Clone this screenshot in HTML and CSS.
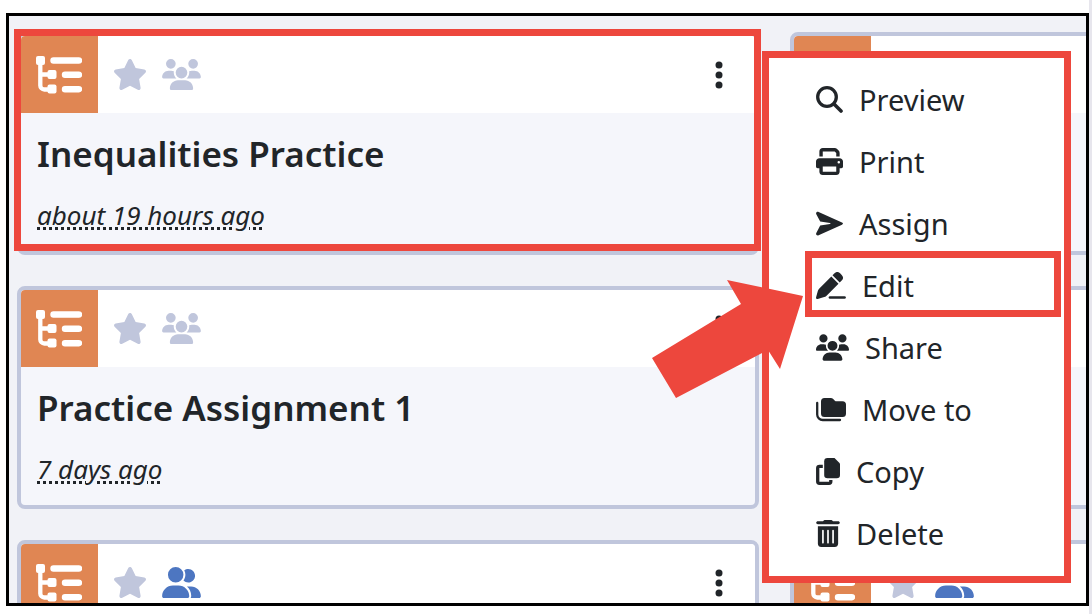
FILE: index.html
```html
<!DOCTYPE html>
<html lang="en">
<head>
    <meta charset="UTF-8">
    <meta name="viewport" content="width=device-width, initial-scale=1.0">
    <title>Assignments</title>
    <link rel="stylesheet" href="styles.css">
</head>
<body>

    <!-- shared icons -->
    <svg class="sprite" aria-hidden="true">
        <symbol id="tree" viewBox="0 0 46 38">
            <rect x="0" y="0" width="9" height="9" rx="2"/>
            <rect x="11.500" y="14" width="9" height="9" rx="2"/>
            <rect x="11.500" y="28.500" width="9" height="9" rx="2"/>
            <path d="M4.300 7v22.500a4 4 0 0 0 4 4H14M4.300 18.500H14" fill="none" stroke="currentColor" stroke-width="4.300"/>
            <path d="M17.500 4.500H43M29 18.800H43M29 33.200H43" fill="none" stroke="currentColor" stroke-width="6.400" stroke-linecap="round"/>
        </symbol>
        <symbol id="star" viewBox="24 0 528 512">
            <path d="M316.900 18C311.600 7 300.400 0 288.100 0s-23.400 7-28.800 18L195 150.300 51.400 171.500c-12 1.800-22 10.200-25.700 21.700s-.7 24.200 7.900 32.700L137.800 329 113.200 474.700c-2 12 3 24.200 12.900 31.300s23 8 33.800 2.300l128.300-68.500 128.300 68.500c10.800 5.700 23.900 4.900 33.800-2.300s14.900-19.300 12.900-31.300L438.500 329 542.700 225.900c8.600-8.500 11.700-21.200 7.900-32.700s-13.700-19.900-25.700-21.700L381.200 150.300 316.900 18z"/>
        </symbol>
        <symbol id="group" viewBox="0 0 640 512">
            <path d="M144 0a80 80 0 1 1 0 160A80 80 0 1 1 144 0zM512 0a80 80 0 1 1 0 160A80 80 0 1 1 512 0zM0 298.700C0 239.800 47.800 192 106.700 192h42.700c15.900 0 31 3.500 44.600 9.700c-1.300 7.200-1.900 14.700-1.900 22.300c0 38.200 16.800 72.500 43.300 96c-.2 0-.4 0-.7 0H21.300C9.600 320 0 310.400 0 298.700zM405.300 320c-.2 0-.4 0-.7 0c26.600-23.500 43.300-57.800 43.300-96c0-7.600-.7-15-1.900-22.300c13.600-6.300 28.700-9.700 44.600-9.700h42.700C592.200 192 640 239.800 640 298.700c0 11.800-9.600 21.300-21.300 21.300H405.300zM224 224a96 96 0 1 1 192 0 96 96 0 1 1 -192 0zM128 485.300C128 411.700 187.700 352 261.300 352H378.700C452.300 352 512 411.700 512 485.300c0 14.700-11.900 26.700-26.700 26.700H154.700c-14.700 0-26.700-11.900-26.700-26.700z"/>
        </symbol>
        <symbol id="pair" viewBox="0 0 640 512">
            <path d="M96 128a128 128 0 1 1 256 0A128 128 0 1 1 96 128zM0 482.300C0 383.800 79.800 304 178.300 304h91.400C368.200 304 448 383.800 448 482.300c0 16.400-13.300 29.700-29.700 29.700H29.700C13.300 512 0 498.700 0 482.300zM609.300 512H471.400c5.400-9.400 8.600-20.300 8.600-32v-8c0-60.700-27.100-115.200-69.800-151.800c2.400-.1 4.700-.2 7.100-.2h61.400C567.800 320 640 392.200 640 481.300c0 17-13.800 30.700-30.700 30.700zM432 256c-31 0-59-12.600-79.300-32.900C372.400 196.500 384 163.600 384 128c0-26.800-6.600-52.100-18.300-74.300C384.300 40.100 407.200 32 432 32c61.900 0 112 50.100 112 112s-50.100 112-112 112z"/>
        </symbol>
        <symbol id="dots" viewBox="0 0 8 28">
            <circle cx="4" cy="4" r="3.500"/><circle cx="4" cy="14" r="3.500"/><circle cx="4" cy="24" r="3.500"/>
        </symbol>
    </svg>

    <main class="frame">
        <div class="grid">
            <article class="card selected">
                <header class="card-head">
                    <span class="type"><svg class="i-tree"><use href="#tree"/></svg></span>
                    <svg class="i-star"><use href="#star"/></svg>
                    <svg class="i-group"><use href="#group"/></svg>
                    <button class="more" type="button" aria-label="More"><svg class="i-dots"><use href="#dots"/></svg></button>
                </header>
                <div class="card-body">
                    <h2>Inequalities Practice</h2>
                    <p><abbr>about 19 hours ago</abbr></p>
                </div>
            </article>
            <article class="card">
                <header class="card-head">
                    <span class="type"></span>
                </header>
                <div class="card-body"></div>
            </article>

            <article class="card">
                <header class="card-head">
                    <span class="type"><svg class="i-tree"><use href="#tree"/></svg></span>
                    <svg class="i-star"><use href="#star"/></svg>
                    <svg class="i-group"><use href="#group"/></svg>
                    <button class="more" type="button" aria-label="More"><svg class="i-dots"><use href="#dots"/></svg></button>
                </header>
                <div class="card-body">
                    <h2>Practice Assignment 1</h2>
                    <p><abbr>7 days ago</abbr></p>
                </div>
            </article>
            <article class="card">
                <header class="card-head">
                    <span class="type"></span>
                </header>
                <div class="card-body"></div>
            </article>

            <article class="card">
                <header class="card-head">
                    <span class="type"><svg class="i-tree"><use href="#tree"/></svg></span>
                    <svg class="i-star"><use href="#star"/></svg>
                    <svg class="i-group shared"><use href="#pair"/></svg>
                    <button class="more" type="button" aria-label="More"><svg class="i-dots"><use href="#dots"/></svg></button>
                </header>
                <div class="card-body"></div>
            </article>
            <article class="card">
                <header class="card-head">
                    <span class="type"><svg class="i-tree"><use href="#tree"/></svg></span>
                    <svg class="i-star"><use href="#star"/></svg>
                    <svg class="i-group shared"><use href="#pair"/></svg>
                </header>
                <div class="card-body"></div>
            </article>
        </div>

        <!-- dropdown of the first card -->
        <div class="menu">
            <button class="item" type="button">
                <svg width="27" height="27" viewBox="0 0 27 27"><circle cx="11" cy="11" r="9.300" fill="none" stroke="currentColor" stroke-width="3.300"/><path d="M18 18l7 7" stroke="currentColor" stroke-width="3.600" stroke-linecap="round"/></svg>
                Preview
            </button>
            <button class="item" type="button">
                <svg width="27" height="27" viewBox="0 0 512 512"><path d="M128 0C92.700 0 64 28.700 64 64v96h64V64H354.700L384 93.300V160h64V93.300c0-17-6.700-33.300-18.700-45.300L400 18.700C388 6.700 371.700 0 354.700 0H128zM384 352v32 64H128V384 368 352H384zm64 32h32c17.700 0 32-14.300 32-32V256c0-35.300-28.700-64-64-64H64c-35.300 0-64 28.700-64 64v96c0 17.700 14.300 32 32 32H64v64c0 35.300 28.700 64 64 64H384c35.300 0 64-28.700 64-64V384zM432 248a24 24 0 1 1 0 48 24 24 0 1 1 0-48z"/></svg>
                Print
            </button>
            <button class="item" type="button">
                <svg width="27" height="27" viewBox="0 0 27 27"><path d="M.300 4.200C-.5 2.600 1 1.200 2.600 1.900L26 12.400c1.300.6 1.300 1.700 0 2.300L2.600 25.200C1 25.900-.5 24.500.300 22.900L4.200 15.500l9.800-1.400c.7-.1.700-1 0-1.100L4.200 11.600z"/></svg>
                Assign
            </button>
            <button class="item current" type="button">
                <svg width="30" height="27" viewBox="0 0 30 27"><path d="M18.500 1.300a4 4 0 0 1 5.600 0l1.600 1.600a4 4 0 0 1 0 5.600l-2 2-7.200-7.200zM15.300 4.500l7.200 7.200L10.300 23.900a5 5 0 0 1-2.100 1.200L1.700 26.900C.7 27.200-.2 26.300.100 25.300l1.800-6.500c.2-.8.700-1.500 1.200-2.100z"/><path d="M14 25.500H28.500" stroke="currentColor" stroke-width="2.700" stroke-linecap="round"/></svg>
                Edit
            </button>
            <button class="item" type="button">
                <svg width="33" height="27"><use href="#group"/></svg>
                Share
            </button>
            <button class="item" type="button">
                <svg width="30" height="27" viewBox="0 0 30 27"><path d="M5 5.500a3.500 3.500 0 0 1 3.500-3.500h6.200c1 0 1.900.4 2.500 1l1.700 1.700c.4.400.9.600 1.400.6h6.200A3.500 3.500 0 0 1 30 8.800v8.700a3.500 3.500 0 0 1-3.500 3.500h-18A3.500 3.500 0 0 1 5 17.500z"/><path d="M1.200 7v11.500a5.500 5.500 0 0 0 5.500 5.500H24" fill="none" stroke="currentColor" stroke-width="2.300" stroke-linecap="round"/></svg>
                Move to
            </button>
            <button class="item" type="button">
                <svg width="24" height="27" viewBox="0 0 24 27"><path d="M11.500 0H18.500l5.500 5.500V17a3.300 3.300 0 0 1-3.300 3.300H11.500A3.300 3.300 0 0 1 8.200 17V3.300A3.300 3.300 0 0 1 11.500 0z"/><path d="M6.800 8.300H3.500A1.800 1.800 0 0 0 1.700 10v13.500a1.800 1.800 0 0 0 1.800 1.800h9.500a1.800 1.800 0 0 0 1.800-1.800V22" fill="none" stroke="currentColor" stroke-width="3.300"/></svg>
                Copy
            </button>
            <button class="item" type="button">
                <svg width="24" height="27" viewBox="0 0 448 512"><path d="M135.200 17.700C140.600 6.800 151.700 0 163.800 0H284.200c12.100 0 23.200 6.800 28.600 17.700L320 24h96c17.700 0 32 12 32 28s-14.300 28-32 28H32C14.300 80 0 68 0 52S14.300 24 32 24h96l7.200-6.300zM32 120H416V448c0 35.300-28.700 64-64 64H96c-35.300 0-64-28.700-64-64V120zm96 64c-8.800 0-16 7.200-16 16V432c0 8.800 7.200 16 16 16s16-7.200 16-16V200c0-8.800-7.200-16-16-16zm96 0c-8.800 0-16 7.200-16 16V432c0 8.800 7.200 16 16 16s16-7.200 16-16V200c0-8.800-7.200-16-16-16zm96 0c-8.800 0-16 7.200-16 16V432c0 8.800 7.200 16 16 16s16-7.200 16-16V200c0-8.800-7.200-16-16-16z"/></svg>
                Delete
            </button>

            <svg class="arrow" viewBox="0 0 151 118" aria-hidden="true"><path d="M75 0L151 16L128 89L116 70L24 118L0 78L89 24Z"/></svg>
        </div>
    </main>

</body>
</html>
```
FILE: styles.css
```css
* {
    box-sizing: border-box;
}
body {
    margin: 0;
    height: 100vh;
    padding: 13px 0 8px 6px;
    display: flex;
    background: #fff;
    border-right: 3px solid #e7e6ed;
    font-family: "Noto Sans", "Open Sans", sans-serif;
    color: #212529;
    overflow: hidden;
}
svg {
    fill: currentColor;
    flex: none;
}
.sprite {
    position: absolute;
    width: 0;
    height: 0;
}
.frame {
    position: relative;
    flex: 1;
    min-width: 0;
    padding: 16px 8px;
    border: 3px solid #000;
    background: #f1f2f7;
    overflow: hidden;
}

/* cards */
.grid {
    display: grid;
    grid-template-columns: repeat(2, calc(68vw - 1px));
    gap: 31px;
}
.card {
    position: relative;
    min-height: 223px;
    border: 4px solid #c0c6dc;
    border-radius: 8px;
    background: #f5f6fb;
}
.card-head {
    display: flex;
    align-items: center;
    height: 77px;
    background: #fff;
    border-radius: 4px 4px 0 0;
}
.type {
    display: flex;
    align-items: center;
    width: 77px;
    height: 77px;
    padding-left: 15px;
    background: #e08653;
    border-radius: 4px 0 0 0;
    color: #fff;
}
.i-tree {
    width: 46px;
    height: 38px;
}
.i-star {
    width: 32px;
    height: 31px;
    margin-left: 16px;
    color: #c0c6dc;
}
.i-group {
    width: 39px;
    height: 31px;
    margin-left: 16px;
    color: #c0c6dc;
}
.i-group.shared {
    color: #4d76c1;
}
.more {
    display: flex;
    margin-left: auto;
    padding: 8px 32px;
    border: 0;
    background: none;
    color: #212529;
}
.i-dots {
    width: 8px;
    height: 28px;
}
.card-body {
    padding: 16px;
}
.card-body h2 {
    margin: 0;
    font-size: 35px;
    font-weight: 600;
    line-height: 50px;
}
.card-body p {
    margin: 18px 0 0;
    font-size: 26px;
    font-style: italic;
    line-height: 36px;
}
.card-body abbr {
    text-decoration: underline dotted 3px;
    text-underline-offset: 2px;
}

/* red highlights */
.selected::after {
    content: "";
    position: absolute;
    inset: -7px -6px 0 -7px;
    border: 7px solid #ed473d;
}
.menu {
    position: absolute;
    top: 35px;
    right: 15px;
    width: 309px;
    padding: 10px 0 12px;
    border: 7px solid #ed473d;
    background: #fff;
}
.item {
    position: relative;
    display: flex;
    align-items: center;
    gap: 16px;
    width: 100%;
    height: 62px;
    padding: 0 0 0 47px;
    border: 0;
    background: none;
    font-family: inherit;
    font-size: 29px;
    color: #212529;
    text-align: left;
}
.current::after {
    content: "";
    position: absolute;
    inset: -3px 3px -1px 36px;
    border: 7px solid #ed473d;
}
.arrow {
    position: absolute;
    top: 222px;
    left: -117px;
    width: 151px;
    height: 118px;
    color: #ed473d;
}
```
